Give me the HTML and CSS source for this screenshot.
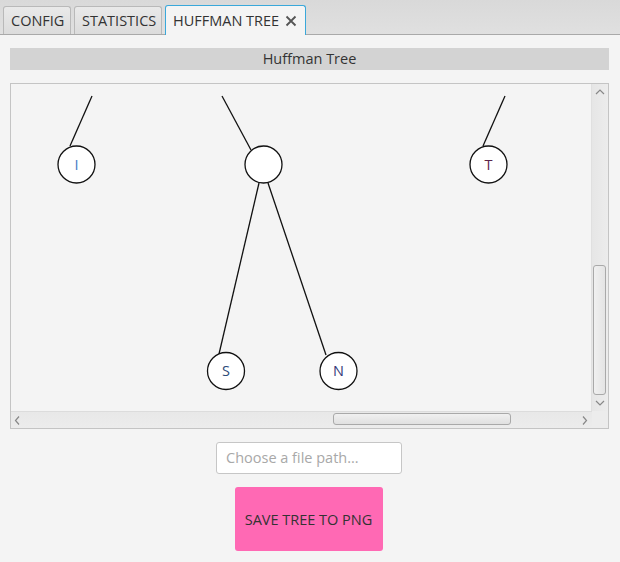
FILE: index.html
```html
<!DOCTYPE html>
<html>
<head>
<meta charset="utf-8">
<link rel="stylesheet" href="styles.css">
</head>
<body>
<div class="tabbar">
  <div class="tab tab-config">CONFIG</div>
  <div class="tab tab-stats">STATISTICS</div>
  <div class="tab tab-tree selected">HUFFMAN TREE
    <svg class="close" width="12" height="12" viewBox="0 0 12 12"><path d="M1.5 1.5 L10.5 10.5 M10.5 1.5 L1.5 10.5" stroke="#555" stroke-width="1.8" fill="none"/></svg>
  </div>
</div>
<div class="content">
  <div class="title">Huffman Tree</div>
  <div class="scrollpane">
    <div class="sp-top">
      <div class="viewport">
        <svg class="tree" width="581" height="327" viewBox="11 84 581 327">
          <g stroke="#111" stroke-width="1.3" fill="none">
            <line x1="92" y1="96" x2="70" y2="146"/>
            <line x1="222" y1="96" x2="251" y2="150"/>
            <line x1="505" y1="96" x2="483" y2="146"/>
            <line x1="259" y1="183" x2="219" y2="354"/>
            <line x1="268" y1="183" x2="326" y2="355"/>
          </g>
          <g stroke="#111" stroke-width="1.3" fill="#fff">
            <circle cx="76.5" cy="164.5" r="18.5"/>
            <circle cx="263.5" cy="164.5" r="18.5"/>
            <circle cx="488.5" cy="164.5" r="18.5"/>
            <circle cx="226" cy="371" r="18.5"/>
            <circle cx="338.5" cy="371" r="18.5"/>
          </g>
          <g class="lbl" text-anchor="middle">
            <text x="76.5" y="169.5" fill="#3b7cc4">I</text>
            <text x="488.5" y="169.5" fill="#5a2448">T</text>
            <text x="226" y="376" fill="#2c4a78">S</text>
            <text x="338.5" y="376" fill="#343a78">N</text>
          </g>
        </svg>
      </div>
      <div class="vbar">
        <svg class="arrow" width="16" height="16" viewBox="0 0 16 16"><path d="M4 10 L8 6 L12 10" stroke="#888" stroke-width="1.2" fill="none"/></svg>
        <div class="vtrack"><div class="vthumb"></div></div>
        <svg class="arrow" width="16" height="16" viewBox="0 0 16 16"><path d="M4 6 L8 10 L12 6" stroke="#888" stroke-width="1.2" fill="none"/></svg>
      </div>
    </div>
    <div class="sp-bottom">
      <div class="hbar">
        <svg class="arrow" width="14" height="17" viewBox="0 0 14 17"><path d="M8 4.5 L4.5 8.5 L8 12.5" stroke="#888" stroke-width="1.2" fill="none"/></svg>
        <div class="htrack"><div class="hthumb"></div></div>
        <svg class="arrow" width="14" height="17" viewBox="0 0 14 17"><path d="M5 4.5 L8.5 8.5 L5 12.5" stroke="#888" stroke-width="1.2" fill="none"/></svg>
      </div>
      <div class="corner"></div>
    </div>
  </div>
  <div class="field">Choose a file path...</div>
  <div class="button">SAVE TREE TO PNG</div>
</div>
</body>
</html>
```
FILE: styles.css
```css
html, body {
  margin: 0;
  padding: 0;
  background: #f4f4f4;
  font-family: "Open Sans", "Noto Sans", sans-serif;
  color: #333;
}
.tabbar {
  height: 34px;
  background: linear-gradient(#d9d9d9, #e0e0e0);
  border-bottom: 1px solid #a9a9a9;
  display: flex;
  align-items: flex-end;
  padding-left: 3px;
  gap: 3px;
  box-sizing: content-box;
}
.tab {
  height: 28px;
  box-sizing: border-box;
  border: 1px solid #b9b9b9;
  border-bottom: none;
  border-radius: 3px 3px 0 0;
  background: linear-gradient(#e9e9e9, #dcdcdc);
  font-size: 14.5px;
  line-height: 27px;
  padding-left: 7px;
  color: #333;
  white-space: nowrap;
  display: flex;
  align-items: center;
}
.tab-config { width: 68px; }
.tab-stats { width: 88px; }
.tab-tree {
  width: 141px;
  height: 30px;
  margin-bottom: -1px;
  background: #f4f4f4;
  border: 1px solid #3aa8da;
  border-bottom: none;
  padding-left: 7px;
}
.close { margin-left: 6px; }
.content {
  padding: 13px 11px 0 10px;
  display: flex;
  flex-direction: column;
  align-items: center;
}
.title {
  align-self: stretch;
  height: 22px;
  background: #d3d3d3;
  text-align: center;
  font-size: 14.5px;
  line-height: 22px;
  color: #333;
}
.scrollpane {
  align-self: stretch;
  margin-top: 13px;
  height: 346px;
  box-sizing: border-box;
  border: 1px solid #c4c4c4;
  display: flex;
  flex-direction: column;
}
.sp-top {
  display: flex;
  height: 327px;
}
.viewport {
  flex: 1;
  overflow: hidden;
  background: #f4f4f4;
}
.tree { display: block; }
.lbl text {
  font-family: "Open Sans", "Noto Sans", sans-serif;
  font-size: 14.5px;
}
.vbar {
  width: 16px;
  background: linear-gradient(90deg, #e6e6e6, #ececec);
  border-left: 1px solid #e0e0e0;
  display: flex;
  flex-direction: column;
}
.arrow { display: block; flex: none; }
.vtrack {
  flex: 1;
  position: relative;
}
.vthumb {
  position: absolute;
  left: 1px;
  width: 11px;
  top: 165px;
  height: 128px;
  border: 1px solid #a9a9a9;
  border-radius: 3px;
  background: linear-gradient(90deg, #f0f0f0, #e4e4e4);
}
.sp-bottom {
  display: flex;
  height: 17px;
}
.hbar {
  flex: 1;
  display: flex;
  align-items: stretch;
  background: linear-gradient(#e8e8e8, #ececec);
  border-top: 1px solid #dcdcdc;
}
.htrack {
  flex: 1;
  position: relative;
}
.hthumb {
  position: absolute;
  top: 1px;
  left: 308px;
  width: 176px;
  height: 10px;
  border: 1px solid #a9a9a9;
  border-radius: 3px;
  background: linear-gradient(#f0f0f0, #e0e0e0);
}
.corner {
  width: 16px;
  background: #ececec;
}
.field {
  margin-top: 13px;
  width: 186px;
  height: 32px;
  box-sizing: border-box;
  border: 1px solid #c6c6c6;
  border-radius: 3px;
  background: #fff;
  color: #a8a8a8;
  font-size: 14.5px;
  line-height: 30px;
  padding-left: 9px;
  white-space: nowrap;
  margin-left: -1px;
}
.button {
  margin-top: 13px;
  width: 148px;
  height: 64px;
  box-sizing: border-box;
  border-radius: 3px;
  background: #ff69b4;
  color: #333;
  font-size: 14.5px;
  display: flex;
  align-items: center;
  justify-content: center;
  white-space: nowrap;
  margin-left: -2px;
}
```
